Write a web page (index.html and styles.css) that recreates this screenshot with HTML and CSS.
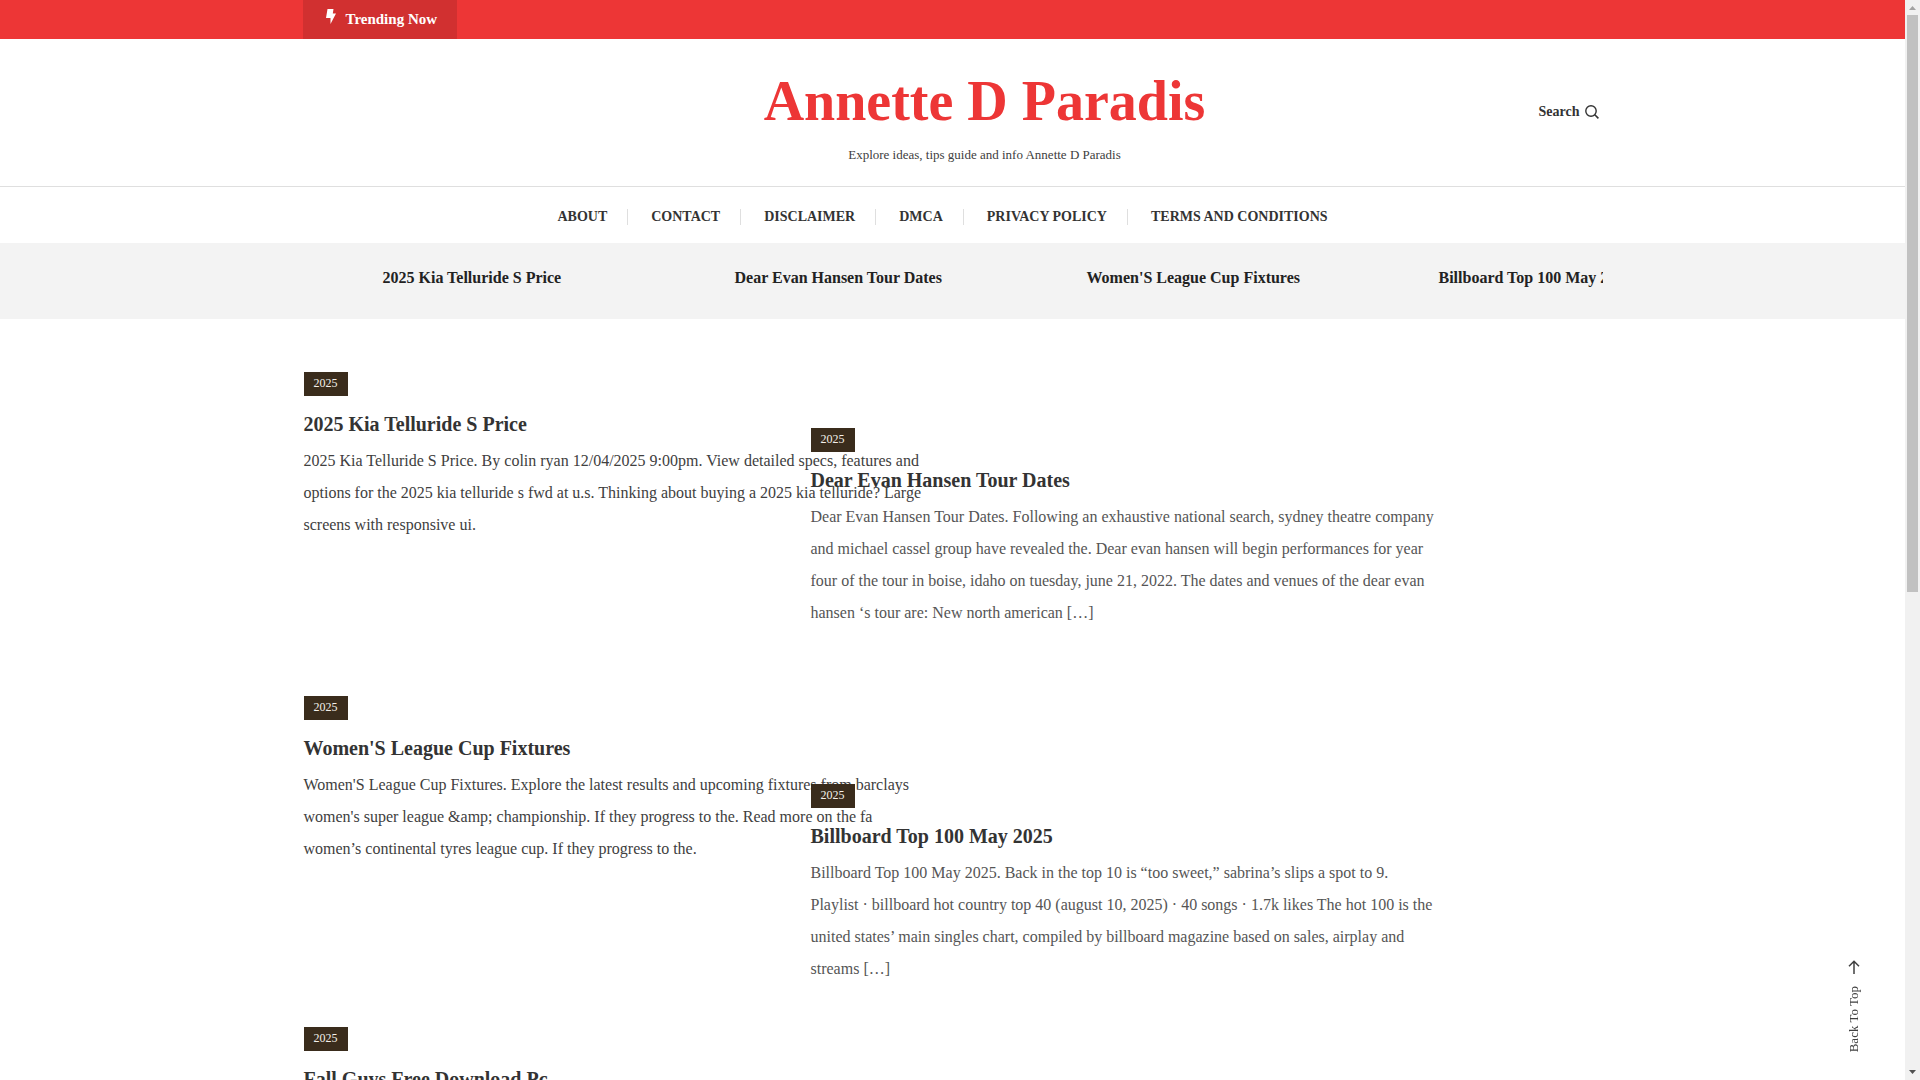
FILE: index.html
```html
<!DOCTYPE html>
<html lang="en">
<head>
<meta charset="utf-8">
<title>Annette D Paradis</title>
<meta name="viewport" content="width=device-width, initial-scale=1">
<link rel="stylesheet" href="styles.css">
</head>
<body>
<div class="page">
  <div class="topbar">
    <div class="container">
      <button class="trending" type="button">
        <svg class="trending-icon" viewBox="0 0 10 15" aria-hidden="true"><path d="M1.500 0h6L6.800 4.500H10L4.500 15V9H0z" fill="currentColor"/></svg>
        <span>Trending Now</span>
      </button>
    </div>
  </div>

  <header class="header">
    <div class="container header-row">
      <div class="branding">
        <h1 class="site-title"><a href="#">Annette D Paradis</a></h1>
        <p class="tagline">Explore ideas, tips guide and info Annette D Paradis</p>
      </div>
      <button class="search" type="button">
        <span>Search</span>
        <svg class="search-icon" viewBox="0 0 14 14" aria-hidden="true"><circle cx="6" cy="6" r="5.200" fill="none" stroke="currentColor" stroke-width="1.400"/><path d="M9.800 9.800L13.400 13.400" stroke="currentColor" stroke-width="1.600"/></svg>
      </button>
    </div>
  </header>

  <nav class="nav" aria-label="Primary">
    <ul class="menu">
      <li><a href="#">About</a></li>
      <li><a href="#">Contact</a></li>
      <li><a href="#">Disclaimer</a></li>
      <li><a href="#">DMCA</a></li>
      <li><a href="#">Privacy Policy</a></li>
      <li><a href="#">Terms and Conditions</a></li>
    </ul>
  </nav>

  <section class="ticker">
    <div class="container ticker-track">
      <h2 class="ticker-item"><a href="#">2025 Kia Telluride S Price</a></h2>
      <h2 class="ticker-item"><a href="#">Dear Evan Hansen Tour Dates</a></h2>
      <h2 class="ticker-item"><a href="#">Women'S League Cup Fixtures</a></h2>
      <h2 class="ticker-item"><a href="#">Billboard Top 100 May 2025</a></h2>
    </div>
  </section>

  <main class="container posts">
    <div class="column">
      <article class="post">
        <a class="badge" href="#">2025</a>
        <h2 class="post-title"><a href="#">2025 Kia Telluride S Price</a></h2>
        <p class="excerpt">2025 Kia Telluride S Price. By colin ryan 12/04/2025 9:00pm. View detailed specs, features and options for the 2025 kia telluride s fwd at u.s. Thinking about buying a 2025 kia telluride? Large screens with responsive ui.</p>
      </article>
      <article class="post">
        <a class="badge" href="#">2025</a>
        <h2 class="post-title"><a href="#">Women'S League Cup Fixtures</a></h2>
        <p class="excerpt">Women'S League Cup Fixtures. Explore the latest results and upcoming fixtures from barclays women's super league &amp;amp; championship. If they progress to the. Read more on the fa women’s continental tyres league cup. If they progress to the.</p>
      </article>
      <article class="post post-entering">
        <a class="badge" href="#">2025</a>
        <h2 class="post-title"><a href="#">Fall Guys Free Download Pc</a></h2>
      </article>
    </div>
    <div class="column column-offset">
      <article class="post">
        <a class="badge" href="#">2025</a>
        <h2 class="post-title"><a href="#">Dear Evan Hansen Tour Dates</a></h2>
        <p class="excerpt">Dear Evan Hansen Tour Dates. Following an exhaustive national search, sydney theatre company and michael cassel group have revealed the. Dear evan hansen will begin performances for year four of the tour in boise, idaho on tuesday, june 21, 2022. The dates and venues of the dear evan hansen ‘s tour are: New north american […]</p>
      </article>
      <article class="post">
        <a class="badge" href="#">2025</a>
        <h2 class="post-title"><a href="#">Billboard Top 100 May 2025</a></h2>
        <p class="excerpt">Billboard Top 100 May 2025. Back in the top 10 is “too sweet,” sabrina’s slips a spot to 9. Playlist · billboard hot country top 40 (august 10, 2025) · 40 songs · 1.7k likes The hot 100 is the united states’ main singles chart, compiled by billboard magazine based on sales, airplay and streams […]</p>
      </article>
    </div>
  </main>
</div>

<a class="to-top" href="#">
  <svg class="to-top-icon" viewBox="0 0 12 14" aria-hidden="true"><path d="M6 14V1.200M1 6.200L6 1.200L11 6.200" fill="none" stroke="currentColor" stroke-width="1.500"/></svg>
  <span class="to-top-label">Back To Top</span>
</a>

<div class="scrollbar" aria-hidden="true">
  <svg class="arrow arrow-up" viewBox="0 0 7 4"><path d="M0 4L3.500 0L7 4z" fill="currentColor"/></svg>
  <div class="thumb"></div>
  <svg class="arrow" viewBox="0 0 7 4"><path d="M0 0L3.500 4L7 0z" fill="currentColor"/></svg>
</div>
</body>
</html>
```
FILE: styles.css
```css
* {
  box-sizing: border-box;
}

html {
  height: 100%;
  overflow: hidden;
}

body {
  margin: 0;
  height: 100%;
  overflow: hidden;
  background: #fff;
  color: #404040;
  font-family: "Liberation Serif", "Times New Roman", serif;
  font-size: 16px;
  line-height: 32px;
}

a {
  color: inherit;
  text-decoration: none;
}

h1, h2, p, ul {
  margin: 0;
  padding: 0;
}

button {
  border: 0;
  padding: 0;
  background: none;
  color: inherit;
  font-family: inherit;
  cursor: pointer;
}

.page {
  padding-right: 15px;
}

.container {
  max-width: 1300px;
  margin: 0 auto;
}

.topbar {
  margin-right: -15px;
  padding-right: 15px;
  background: #ed3636;
}

.trending {
  display: flex;
  gap: 10px;
  padding: 9px 20px 10px 23px;
  background: #d13030;
  color: #fff;
  font-size: 15px;
  font-weight: bold;
  line-height: 20px;
}

.trending-icon {
  width: 10px;
  height: 15px;
}

.header {
  margin-right: -15px;
  padding: 30px 15px 21px 0;
  border-bottom: 1px solid #dfdfdf;
}

.header-row {
  display: grid;
  grid-template-columns: 1fr 64px;
  align-items: center;
}

.branding {
  padding-left: 128px;
  text-align: center;
}

.site-title {
  color: #ed3636;
  font-size: 56px;
  line-height: 64px;
}

.tagline {
  padding-top: 12px;
  font-size: 13px;
  line-height: 20px;
}

.search {
  display: flex;
  align-items: center;
  gap: 6px;
  padding-bottom: 10px;
  color: #333;
  font-size: 14px;
  font-weight: bold;
  line-height: 20px;
}

.search-icon {
  width: 14px;
  height: 14px;
  flex: none;
}

.menu {
  display: flex;
  justify-content: center;
  padding: 22px 0 18px;
  list-style: none;
  color: #333;
  font-size: 14px;
  font-weight: bold;
  line-height: 16px;
  text-transform: uppercase;
}

.menu li {
  padding-right: 20px;
}

.menu li + li {
  padding-left: 23px;
  border-left: 1px solid #dfdfdf;
}

.ticker {
  margin-right: -15px;
  padding: 19px 15px 25px 0;
  background: #f3f3f3;
}

.ticker-track {
  display: flex;
  overflow: hidden;
}

.ticker-item {
  flex: 0 0 352px;
  padding-left: 80px;
  color: #222;
  font-size: 16px;
  line-height: 32px;
  white-space: nowrap;
}

.posts {
  display: flex;
  padding: 53px 0 0 1px;
}

.column {
  display: flex;
  flex-direction: column;
  flex: 0 0 507px;
  gap: 155px;
  min-width: 0;
}

.column-offset {
  padding-top: 56px;
  color: #555;
}

/* Cards are wider than their column, so the second column lies over the first. */
.post {
  position: relative;
  width: 627px;
}

.post-entering {
  margin-top: 7px;
}

.badge {
  display: block;
  width: 44px;
  padding-bottom: 2px;
  background: #3a2c1c;
  color: #f4f0ea;
  font-size: 12px;
  line-height: 22px;
  text-align: center;
}

.post-title {
  padding: 13px 0 6px;
  color: #333;
  font-size: 20px;
  line-height: 30px;
}

.to-top {
  position: fixed;
  right: 58px;
  bottom: 28px;
  display: flex;
  flex-direction: column;
  align-items: center;
  gap: 12px;
}

.to-top-icon {
  width: 12px;
  height: 14px;
}

.to-top-label {
  font-size: 13px;
  line-height: 16px;
  writing-mode: vertical-rl;
  transform: rotate(180deg);
}

.scrollbar {
  position: fixed;
  top: 0;
  right: 0;
  bottom: 0;
  display: flex;
  flex-direction: column;
  align-items: center;
  justify-content: space-between;
  width: 15px;
  padding: 6px 0;
  background: #f1f1f1;
  color: #505050;
}

.arrow {
  width: 7px;
  height: 4px;
}

.arrow-up {
  color: #a3a3a3;
}

.thumb {
  width: 11px;
  height: 54%;
  margin: 5px 0 auto;
  background: #c1c1c1;
}
```
